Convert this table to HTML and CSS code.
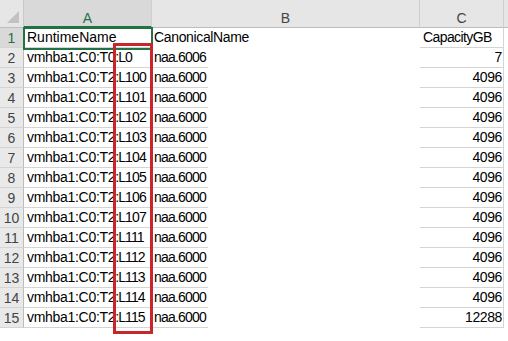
FILE: index.html
```html
<!DOCTYPE html>
<html>
<head>
<meta charset="utf-8">
<link rel="stylesheet" href="styles.css">
</head>
<body>
<div class="sheet">
  <div class="corner"><span class="tri"></span></div>
  <div class="colhead sel">A</div>
  <div class="colhead">B</div>
  <div class="colhead">C</div>
  <div class="colhead last"></div>

  <div class="rowhead sel">1</div>
  <div class="cell a">RuntimeName</div>
  <div class="cell b nb title">CanonicalName</div>
  <div class="cell c title2">CapacityGB</div>
  <div class="cell d"></div>

  <div class="rowhead">2</div><div class="cell a data">vmhba1:C0:T0<span class="lun">:L0</span></div><div class="cell b data">naa.6006</div><div class="cell c num">7</div><div class="cell d"></div>
  <div class="rowhead">3</div><div class="cell a data">vmhba1:C0:T2<span class="lun">:L100</span></div><div class="cell b data">naa.6000</div><div class="cell c num">4096</div><div class="cell d"></div>
  <div class="rowhead">4</div><div class="cell a data">vmhba1:C0:T2<span class="lun">:L101</span></div><div class="cell b data">naa.6000</div><div class="cell c num">4096</div><div class="cell d"></div>
  <div class="rowhead">5</div><div class="cell a data">vmhba1:C0:T2<span class="lun">:L102</span></div><div class="cell b data">naa.6000</div><div class="cell c num">4096</div><div class="cell d"></div>
  <div class="rowhead">6</div><div class="cell a data">vmhba1:C0:T2<span class="lun">:L103</span></div><div class="cell b data">naa.6000</div><div class="cell c num">4096</div><div class="cell d"></div>
  <div class="rowhead">7</div><div class="cell a data">vmhba1:C0:T2<span class="lun">:L104</span></div><div class="cell b data">naa.6000</div><div class="cell c num">4096</div><div class="cell d"></div>
  <div class="rowhead">8</div><div class="cell a data">vmhba1:C0:T2<span class="lun">:L105</span></div><div class="cell b data">naa.6000</div><div class="cell c num">4096</div><div class="cell d"></div>
  <div class="rowhead">9</div><div class="cell a data">vmhba1:C0:T2<span class="lun">:L106</span></div><div class="cell b data">naa.6000</div><div class="cell c num">4096</div><div class="cell d"></div>
  <div class="rowhead">10</div><div class="cell a data">vmhba1:C0:T2<span class="lun">:L107</span></div><div class="cell b data">naa.6000</div><div class="cell c num">4096</div><div class="cell d"></div>
  <div class="rowhead">11</div><div class="cell a data">vmhba1:C0:T2<span class="lun">:L111</span></div><div class="cell b data">naa.6000</div><div class="cell c num">4096</div><div class="cell d"></div>
  <div class="rowhead">12</div><div class="cell a data">vmhba1:C0:T2<span class="lun">:L112</span></div><div class="cell b data">naa.6000</div><div class="cell c num">4096</div><div class="cell d"></div>
  <div class="rowhead">13</div><div class="cell a data">vmhba1:C0:T2<span class="lun">:L113</span></div><div class="cell b data">naa.6000</div><div class="cell c num">4096</div><div class="cell d"></div>
  <div class="rowhead">14</div><div class="cell a data">vmhba1:C0:T2<span class="lun">:L114</span></div><div class="cell b data">naa.6000</div><div class="cell c num">4096</div><div class="cell d"></div>
  <div class="rowhead">15</div><div class="cell a data">vmhba1:C0:T2<span class="lun">:L115</span></div><div class="cell b data">naa.6000</div><div class="cell c num">12288</div><div class="cell d"></div>

  <div class="selbox"></div>
  <div class="redbox"></div>
</div>
</body>
</html>
```

FILE: styles.css
```css
html, body {
  margin: 0;
  padding: 0;
  background: #ffffff;
  width: 508px;
  height: 341px;
  overflow: hidden;
}
.sheet {
  position: relative;
  display: grid;
  grid-template-columns: 24px 128px 268px 84px 1fr;
  grid-template-rows: 28px;
  grid-auto-rows: 20px;
  font-family: "Liberation Sans", Arial, sans-serif;
  font-size: 14px;
  color: #000;
}
.corner {
  position: relative;
  background: #e6e6e6;
  border-right: 1px solid #c8c8c8;
  border-bottom: 1px solid #bdbdbd;
  box-sizing: border-box;
}
.tri {
  position: absolute;
  right: 4px;
  bottom: 4px;
  width: 0;
  height: 0;
  border-left: 12px solid transparent;
  border-bottom: 12px solid #c2c2c2;
}
.colhead {
  background: #e6e6e6;
  color: #444;
  text-align: center;
  line-height: 18px;
  padding-top: 9px;
  box-sizing: border-box;
  border-right: 1px solid #cfcfcf;
  border-bottom: 1px solid #bdbdbd;
}
.colhead.sel {
  background: #d9d9d9;
  color: #217346;
  border-bottom: 2px solid #217346;
}
.colhead.last {
  border-right: none;
}
.rowhead {
  background: #e9e9e9;
  color: #444;
  text-align: center;
  line-height: 19px;
  padding-top: 1px;
  box-sizing: border-box;
  border-right: 1px solid #bdbdbd;
  border-bottom: 1px solid #d4d4d4;
  overflow: hidden;
}
.rowhead.sel {
  background: #d9d9d9;
  color: #217346;
}
.cell {
  box-sizing: border-box;
  line-height: 19px;
  padding-left: 3px;
  white-space: nowrap;
  overflow: hidden;
}
.cell.a {
  border-right: 1px solid #d4d4d4;
  border-bottom: 1px solid #d4d4d4;
}
.cell.b {
  padding-left: 2px;
  background-image: linear-gradient(#d4d4d4, #d4d4d4);
  background-repeat: no-repeat;
  background-size: 56px 1px;
  background-position: left bottom;
}
.cell.b.nb {
  background-image: none;
}
.cell.a.data {
  letter-spacing: -0.3px;
}
.cell.b.data {
  letter-spacing: -0.8px;
}
.lun {
  letter-spacing: -0.9px;
}
.cell.title {
  letter-spacing: -0.35px;
}
.cell.title2 {
  letter-spacing: -0.6px;
}
.cell.c {
  border-bottom: 1px solid #d4d4d4;
  border-right: 1px solid #d4d4d4;
}
.cell.num {
  text-align: right;
  padding-right: 1px;
  letter-spacing: -0.4px;
}
.selbox {
  position: absolute;
  left: 23px;
  top: 27px;
  width: 130px;
  height: 23px;
  border: 2px solid #217346;
  box-sizing: border-box;
}
.redbox {
  position: absolute;
  left: 113px;
  top: 43px;
  width: 40px;
  height: 291px;
  border: 3px solid #c9252c;
  box-sizing: border-box;
}
```
